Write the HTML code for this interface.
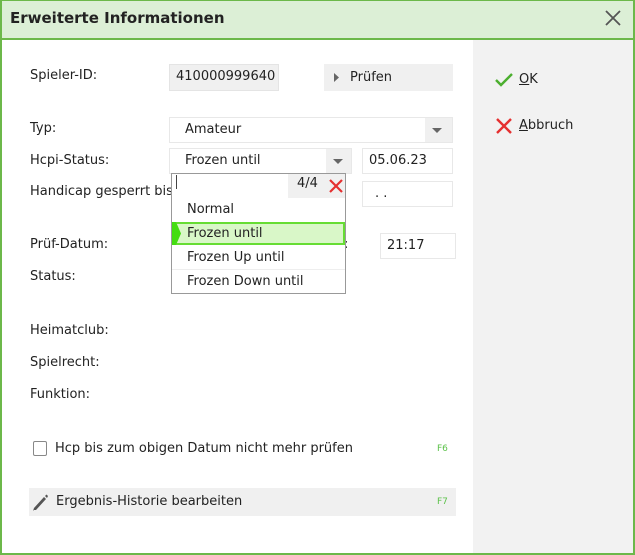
<!DOCTYPE html>
<html><head><meta charset="utf-8"><style>
*{box-sizing:border-box;margin:0;padding:0}
body{width:635px;height:555px;position:relative;overflow:hidden;background:#fff;font-family:"DejaVu Sans","Liberation Sans",sans-serif;font-size:13px;color:#222}
.a{position:absolute}
.lbl{position:absolute;left:30px;line-height:16px}
.box{position:absolute;border:1px solid #e8e8e8;background:#fff;padding-left:15px;line-height:24px}
</style></head><body>
<div class="a" style="left:0;top:0;width:635px;height:555px;border:2px solid #6cb84a;border-top:1px solid #6cb84a"></div>
<div class="a" style="left:2px;top:1px;width:631px;height:37px;background:#dcefd6"></div>
<div class="a" style="left:0;top:38px;width:635px;height:2px;background:#6cb84a"></div>
<div class="a" style="left:10px;top:9px;font-size:15px;font-weight:bold;color:#222">Erweiterte Informationen</div>
<svg class="a" style="left:605px;top:10px" width="16" height="16"><path d="M1 1L15 15M15 1L1 15" stroke="#555" stroke-width="1.8"/></svg>
<div class="a" style="left:473px;top:40px;width:160px;height:513px;background:#f2f2f2"></div>
<div class="a" style="left:0;top:553px;width:635px;height:2px;background:#6cb84a"></div>

<svg class="a" style="left:495px;top:73px" width="18" height="14"><path d="M1 7L6 12L17 1" stroke="#4caf2f" stroke-width="2.4" fill="none"/></svg>
<div class="a" style="left:519px;top:72px"><u>O</u>K</div>
<svg class="a" style="left:496px;top:118px" width="16" height="16"><path d="M1 1L15 15M15 1L1 15" stroke="#e53030" stroke-width="2.4"/></svg>
<div class="a" style="left:519px;top:118px"><u>A</u>bbruch</div>

<div class="lbl" style="top:68px">Spieler-ID:</div>
<div class="box" style="left:169px;top:64px;width:110px;height:27px;background:#f0f0f0;border-color:#e4e4e4;padding-left:6px">410000999640</div>
<div class="a" style="left:324px;top:64px;width:129px;height:27px;background:#f0f0f0;line-height:27px;padding-left:26px">Prüfen</div>
<svg class="a" style="left:334px;top:73px" width="6" height="9"><path d="M0 0L5 4.5L0 9Z" fill="#666"/></svg>

<div class="lbl" style="top:121px">Typ:</div>
<div class="box" style="left:169px;top:117px;width:284px;height:26px">Amateur</div>
<div class="a" style="left:425px;top:118px;width:27px;height:24px;background:#f0f0f0"></div>
<svg class="a" style="left:432px;top:128px" width="11" height="6"><path d="M0 0H10L5 5Z" fill="#666"/></svg>

<div class="lbl" style="top:153px">Hcpi-Status:</div>
<div class="box" style="left:169px;top:148px;width:183px;height:26px">Frozen until</div>
<div class="a" style="left:326px;top:149px;width:25px;height:24px;background:#f0f0f0"></div>
<svg class="a" style="left:333px;top:159px" width="11" height="6"><path d="M0 0H10L5 5Z" fill="#666"/></svg>
<div class="box" style="left:362px;top:148px;width:91px;height:26px;padding-left:6px">05.06.23</div>

<div class="lbl" style="top:184px">Handicap gesperrt bis</div>
<div class="box" style="left:362px;top:181px;width:91px;height:26px;padding-left:12px">. .</div>

<div class="lbl" style="top:237px">Prüf-Datum:</div>
<div class="a" style="left:344px;top:237px">:</div>
<div class="box" style="left:380px;top:233px;width:76px;height:26px;padding-left:6px">21:17</div>
<div class="lbl" style="top:269px">Status:</div>
<div class="lbl" style="top:323px">Heimatclub:</div>
<div class="lbl" style="top:355px">Spielrecht:</div>
<div class="lbl" style="top:387px">Funktion:</div>

<!-- dropdown -->
<div class="a" style="left:171px;top:173px;width:175px;height:121px;background:#fff;border:1px solid #999"></div>
<div class="a" style="left:176px;top:175px;width:1px;height:14px;background:#444"></div>
<div class="a" style="left:288px;top:174px;width:57px;height:24px;background:#f0f0f0"></div>
<div class="a" style="left:297px;top:176px">4/4</div>
<svg class="a" style="left:329px;top:179px" width="14" height="14"><path d="M1 1L13 13M13 1L1 13" stroke="#e53030" stroke-width="2.2"/></svg>
<div class="a" style="left:187px;top:202px">Normal</div>
<div class="a" style="left:172px;top:222px;width:173px;height:23px;background:#d9f7c8;border:2px solid #66dd33"></div>
<svg class="a" style="left:172px;top:222px" width="10" height="23"><path d="M0 0H4L9 11.5L4 23H0Z" fill="#44dd11"/></svg>
<div class="a" style="left:187px;top:226px">Frozen until</div>
<div class="a" style="left:187px;top:250px">Frozen Up until</div>
<div class="a" style="left:172px;top:269px;width:173px;height:1px;background:#eee"></div>
<div class="a" style="left:187px;top:274px">Frozen Down until</div>

<div class="a" style="left:33px;top:441px;width:14px;height:15px;border:1.5px solid #888;border-radius:2px;background:#fff"></div>
<div class="a" style="left:55px;top:441px">Hcp bis zum obigen Datum nicht mehr prüfen</div>
<div class="a" style="left:437px;top:444px;font-size:9px;color:#5cc24a">F6</div>

<div class="a" style="left:29px;top:488px;width:427px;height:28px;background:#f0f0f0"></div>
<svg class="a" style="left:31px;top:492px" width="18" height="20"><path d="M3 18L2 19L3 16L13 5L15 7L5 18Z" fill="#555"/><path d="M14 4L15.5 2.5L17 4L16 6Z" fill="#555"/></svg>
<div class="a" style="left:56px;top:494px">Ergebnis-Historie bearbeiten</div>
<div class="a" style="left:437px;top:497px;font-size:9px;color:#5cc24a">F7</div>
</body></html>
